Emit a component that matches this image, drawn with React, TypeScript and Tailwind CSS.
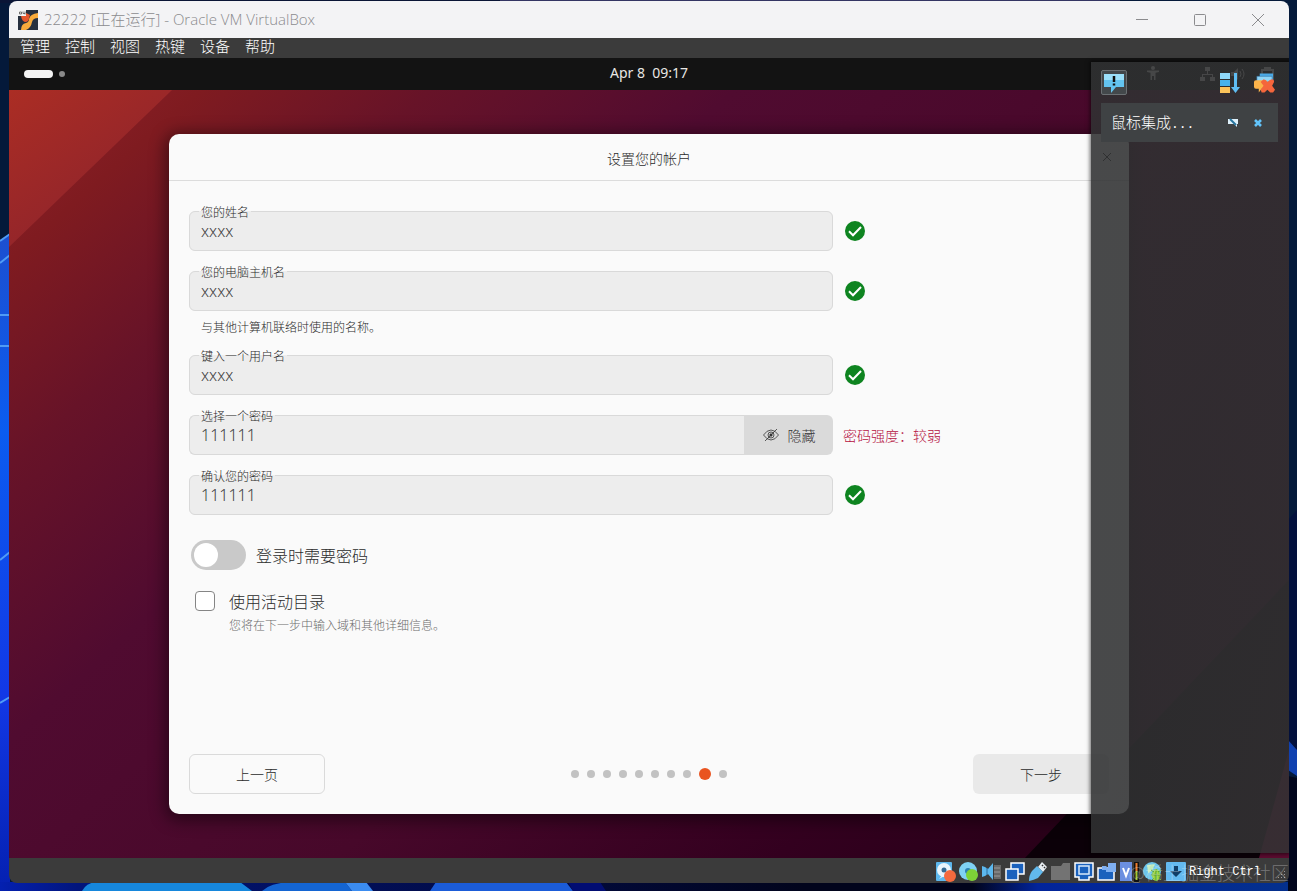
import { useState, type ReactNode } from 'react'

const menus = ['管理', '控制', '视图', '热键', '设备', '帮助']

function DesktopBackground() {
  return (
    <svg className="absolute inset-0 h-full w-full" viewBox="0 0 1297 891" preserveAspectRatio="none" aria-hidden="true">
      <defs>
        <linearGradient id="petal" x1="0" y1="0" x2="0" y2="1">
          <stop offset="0" stopColor="#1c4fd0" />
          <stop offset="0.3" stopColor="#0b5cf0" />
          <stop offset="0.7" stopColor="#1238e6" />
          <stop offset="1" stopColor="#0420b0" />
        </linearGradient>
        <linearGradient id="floor" x1="0" y1="0" x2="1" y2="0">
          <stop offset="0" stopColor="#0420b0" />
          <stop offset="0.06" stopColor="#02157c" />
          <stop offset="0.62" stopColor="#01041c" />
          <stop offset="0.75" stopColor="#01041c" />
          <stop offset="0.8" stopColor="#02249a" />
          <stop offset="1" stopColor="#04308c" />
        </linearGradient>
      </defs>
      <rect width="1297" height="891" fill="#04193a" />
      <rect x="0" width="500" height="3" fill="#0a1536" />
      <rect x="500" width="620" height="3" fill="#343563" />
      <path d="M0 241 L10 234 V891 H0Z" fill="url(#petal)" />
      <path d="M0 241 L10 234 M0 263 L10 255 M0 315 h10 M0 346 h10 M0 560 l10 -8 M0 703 l10 -6" stroke="#4f9bf5" strokeWidth="2" fill="none" />
      <rect y="882" width="1297" height="9" fill="url(#floor)" />
      <path d="M82 891 Q86 883 96 882 H240 L252 891Z" fill="#1687dc" />
      <path d="M262 891 Q270 883 290 882 H345 L352 891Z" fill="#1465d2" />
      <path d="M352 891 L345 882 H366 L373 891Z" fill="#3b8cf0" />
      <path d="M430 891 L436 882 H566 L573 891Z" fill="#1b5cd8" />
      <path d="M573 891 L568 882 H600 L606 891Z" fill="#020d72" />
      <path d="M1288 520 L1297 510 V774 L1288 768Z" fill="#02103c" />
      <path d="M1288 740 L1297 750 V776 L1288 770Z" fill="#1041b0" />
      <path d="M1288 776 L1297 778 V891 H1288Z" fill="#01061c" />
    </svg>
  )
}

function Wallpaper() {
  return (
    <svg className="absolute inset-0 h-full w-full" viewBox="0 0 1280 768" preserveAspectRatio="none" aria-hidden="true">
      <defs>
        <linearGradient id="wall" gradientUnits="userSpaceOnUse" x1="0" y1="0" x2="850" y2="950">
          <stop offset="0" stopColor="#90222a" />
          <stop offset="0.1" stopColor="#7f1b20" />
          <stop offset="0.22" stopColor="#671328" />
          <stop offset="0.38" stopColor="#500b30" />
          <stop offset="0.62" stopColor="#47082a" />
          <stop offset="0.85" stopColor="#33001f" />
          <stop offset="1" stopColor="#280018" />
        </linearGradient>
        <linearGradient id="corner" x1="0" y1="0" x2="0.6" y2="0.8">
          <stop offset="0" stopColor="#ab2d24" />
          <stop offset="1" stopColor="#90242b" />
        </linearGradient>
      </defs>
      <rect width="1280" height="768" fill="url(#wall)" />
      <path d="M0 0 H163 L0 157Z" fill="url(#corner)" />
      <path d="M1280 490 L1016 768 H1280Z" fill="#0b0008" />
      <path d="M1280 660 L1250 768 H1280Z" fill="#5c0b30" />
    </svg>
  )
}

function AppLogo() {
  return (
    <svg width="20" height="20" viewBox="0 0 20 20" aria-hidden="true">
      <rect width="20" height="20" fill="#26303f" />
      <path d="M3 20 Q3 14 8 13 Q11 12 11 9 Q12 4 20 3 V8 Q15 8 14 12 Q13 18 8 20Z" fill="#f8ab3c" />
      <path d="M3 6 Q4 12 8 12 Q11 11 11 8 L12 5 L8 3Z" fill="#e4572e" />
      <rect width="8" height="6" fill="#f4f4f4" />
      <path d="M1.5 2h2v2h-2zM5 1.5v2h2M7 1.5v3" stroke="#555" strokeWidth="0.8" fill="none" />
    </svg>
  )
}

function TitleBar() {
  return (
    <header className="flex h-[37px] items-center bg-[#f3f3f5] pl-[9px] pr-0.5 text-[#8b8b8e]">
      <AppLogo />
      <h1 className="ml-1.5 flex-1 pb-0.5 font-['Open_Sans','Noto_Sans_CJK_SC',sans-serif] text-[15px] leading-5">
        22222 [正在运行] - Oracle VM VirtualBox
      </h1>
      <button aria-label="最小化" className="flex h-full w-[58px] items-center justify-center">
        <svg width="12" height="12" viewBox="0 0 12 12" stroke="currentColor"><path d="M0 5.5h12" /></svg>
      </button>
      <button aria-label="最大化" className="flex h-full w-[58px] items-center justify-center">
        <svg width="12" height="12" viewBox="0 0 12 12" fill="none" stroke="currentColor"><rect x="0.5" y="0.5" width="11" height="11" rx="1" /></svg>
      </button>
      <button aria-label="关闭" className="flex h-full w-[58px] items-center justify-center">
        <svg width="12" height="12" viewBox="0 0 12 12" stroke="currentColor"><path d="M0 0l12 12M12 0L0 12" /></svg>
      </button>
    </header>
  )
}

function GuestTopBar() {
  return (
    <div className="relative flex h-8 items-center justify-between bg-[#131313] px-[15px] text-[#e8e6e3]">
      <div className="flex flex-1 items-center gap-1.5">
        <span className="h-2 w-[29px] rounded-full bg-[#f4f4f4]" />
        <span className="size-1.5 rounded-full bg-[#8a8a8a]" />
      </div>
      <time className="whitespace-pre pb-0.5 font-['Noto_Sans',sans-serif] text-sm font-normal">Apr 8  09:17</time>
      <div className="flex flex-1 items-center justify-end">
        <svg className="mr-10" width="14" height="16" viewBox="0 0 14 16" fill="currentColor" aria-hidden="true">
          <circle cx="7" cy="2" r="2" />
          <path d="M1 4.5h12v1.6l-3.5.6V14H8V10H6v4H4.5V6.7L1 6.1z" />
        </svg>
        <svg className="mr-4" width="15" height="14" viewBox="0 0 15 14" fill="currentColor" aria-hidden="true">
          <path d="M5 0h5v4H8v3h5v3h2v4h-5v-4h2V8H3v2h2v4H0v-4h2V7h5V4H5z" />
        </svg>
        <svg className="mr-4" width="14" height="14" viewBox="0 0 14 14" fill="currentColor" aria-hidden="true">
          <path d="M0 5h3l4-4v12L3 9H0z" />
          <path d="M9 4q2 3 0 6M11 2q4 5 0 10" fill="none" stroke="currentColor" />
        </svg>
        <svg width="13" height="15" viewBox="0 0 13 15" fill="none" stroke="currentColor" strokeWidth="2" aria-hidden="true">
          <path d="M1 3h11v11H1zM4 3V1h5v2" />
        </svg>
      </div>
    </div>
  )
}

function ValidIcon() {
  return (
    <span className="ml-3 flex h-10 items-center">
      <svg width="20" height="20" viewBox="0 0 20 20" role="img" aria-label="有效">
        <circle cx="10" cy="10" r="10" fill="#0e8420" />
        <path d="M4 10.3l4 4 8-8.3" fill="none" stroke="#fff" strokeWidth="2" />
      </svg>
    </span>
  )
}

interface FieldProps {
  id: string
  label: string
  value: string
  onChange: (value: string) => void
  button?: ReactNode
  status?: ReactNode
}

function Field({ id, label, value, onChange, button, status = <ValidIcon /> }: FieldProps) {
  return (
    <div className="flex items-end">
      <div className="flex w-[70%] items-end">
        <fieldset
          className={`min-w-0 flex-1 border border-[#d9d9d9] bg-[#ededed] pl-[9px] ${
            button ? 'rounded-l-md border-r-0' : 'rounded-md'
          }`}
        >
          <legend className="px-0.5 pt-0.5 text-xs leading-4 text-[#2b2b2b]">
            <label htmlFor={id}>{label}</label>
          </legend>
          <input
            id={id}
            type="text"
            value={value}
            onChange={(e) => onChange(e.target.value)}
            className="mb-2 block h-[22px] w-full bg-transparent px-0.5 font-['Noto_Sans',sans-serif] text-base leading-[22px] text-[#3d3d3d] outline-none"
          />
        </fieldset>
        {button}
      </div>
      {status}
    </div>
  )
}

function HideButton() {
  return (
    <button type="button" className="flex h-10 w-[89px] items-center justify-center gap-2 rounded-r-md bg-[#dadada] text-sm text-[#333]">
      <svg width="18" height="14" viewBox="0 0 18 14" fill="none" stroke="currentColor" strokeWidth="0.8" aria-hidden="true">
        <path d="M1.500 7Q5 2 9 2t7.500 5Q13 12 9 12T1.500 7z" />
        <circle cx="9" cy="7" r="3" />
        <circle cx="9" cy="7" r="1.2" fill="currentColor" />
        <path d="M3 13L15 1" />
      </svg>
      隐藏
    </button>
  )
}

function PageDots({ count, current }: { count: number; current: number }) {
  return (
    <div className="flex items-center gap-2">
      {Array.from({ length: count }, (_, i) => (
        <span key={i} className={i === current ? 'size-3 rounded-full bg-[#e95420]' : 'size-2 rounded-full bg-[#c2c2c2]'} />
      ))}
    </div>
  )
}

function SetupPanel() {
  const [form, setForm] = useState({
    name: 'xxxx',
    host: 'xxxx',
    user: 'xxxx',
    password: '111111',
    confirm: '111111',
  })
  const [requirePassword, setRequirePassword] = useState(false)
  const [useDirectory, setUseDirectory] = useState(false)

  const update = (key: keyof typeof form) => (value: string) => setForm({ ...form, [key]: value })

  return (
    <section className="relative mx-40 my-11 flex flex-1 flex-col overflow-hidden rounded-[10px] bg-[#fafafa] text-[#2b2b2b] shadow-[0_3px_16px_4px_rgba(0,0,0,0.45)]">
      {/* Header */}
      <div className="flex h-[47px] items-center border-b border-[#dcdcdc] px-4">
        <span className="w-3" />
        <h2 className="flex-1 pt-0.5 text-center text-sm">设置您的帐户</h2>
        <button aria-label="关闭" className="flex w-3 justify-center">
          <svg width="10" height="10" viewBox="0 0 10 10" stroke="currentColor"><path d="M1 1l8 8M9 1L1 9" /></svg>
        </button>
      </div>

      <form className="flex flex-1 flex-col px-5 pb-5 pt-[21px]" onSubmit={(e) => e.preventDefault()}>
        <div className="flex flex-col gap-[11px]">
          <Field id="name" label="您的姓名" value={form.name} onChange={update('name')} />
          <div>
            <Field id="host" label="您的电脑主机名" value={form.host} onChange={update('host')} />
            <p className="mt-2 pl-3 text-xs leading-4">与其他计算机联络时使用的名称。</p>
          </div>
          <Field id="user" label="键入一个用户名" value={form.user} onChange={update('user')} />
          <Field
            id="password"
            label="选择一个密码"
            value={form.password}
            onChange={update('password')}
            button={<HideButton />}
            status={<span className="ml-2.5 text-sm leading-10 text-[#b5103f]">密码强度：较弱</span>}
          />
          <Field id="confirm" label="确认您的密码" value={form.confirm} onChange={update('confirm')} />
        </div>

        {/* Switch */}
        <label className="mt-[25px] flex items-center gap-2.5 self-start pl-0.5 text-base leading-[30px]">
          <input
            type="checkbox"
            role="switch"
            checked={requirePassword}
            onChange={(e) => setRequirePassword(e.target.checked)}
            className="flex h-[30px] w-[55px] appearance-none items-center rounded-full bg-[#c9c9c9] px-[3px] before:size-6 before:rounded-full before:bg-white checked:justify-end checked:bg-[#e95420]"
          />
          登录时需要密码
        </label>

        {/* Active Directory */}
        <div className="mt-[19px] flex gap-3.5 pl-1.5">
          <input
            id="directory"
            type="checkbox"
            checked={useDirectory}
            onChange={(e) => setUseDirectory(e.target.checked)}
            className="mt-0.5 size-5 appearance-none rounded border border-[#858585] bg-white checked:bg-[#e95420]"
          />
          <div>
            <label htmlFor="directory" className="block text-base leading-6">使用活动目录</label>
            <p className="pt-0.5 text-xs leading-5 text-[#6b6b6b]">您将在下一步中输入域和其他详细信息。</p>
          </div>
        </div>

        {/* Navigation */}
        <div className="mt-auto flex items-center justify-between text-sm">
          <button type="button" className="h-10 w-[136px] rounded-md border border-[#dadada]">上一页</button>
          <PageDots count={10} current={8} />
          <button type="submit" className="h-10 w-[136px] rounded-md bg-[#e9e9e9]">下一步</button>
        </div>
      </form>
    </section>
  )
}

function NotificationCenter() {
  return (
    <aside className="absolute bottom-[5px] right-0 top-1 w-[198px] bg-linear-to-br from-[#303132]/88 via-[#303132]/88 to-[#333133]/90 pl-2.5 pr-[11px] pt-2 shadow-[0_0_4px_1px_rgba(0,0,0,0.6)]">
      <div className="flex items-center justify-between">
        <button aria-label="通知" className="flex h-[25px] w-[26px] items-center justify-center rounded-xs border border-[#6b7073] bg-[#43484b]">
          <svg width="20" height="20" viewBox="0 0 20 20" aria-hidden="true">
            <path d="M0 1h20v13h-8l-5 6v-6H0z" fill="#63c4f0" />
            <path d="M0 1h20v6H0z" fill="#9be0fa" />
            <path d="M10 3v6M10 10.5v2" stroke="#111" strokeWidth="2.500" />
          </svg>
        </button>
        <div className="flex items-center gap-3.5 pr-[3px]">
          <button aria-label="排序">
            <svg width="20" height="20" viewBox="0 0 20 20" aria-hidden="true">
              <rect x="0" y="0" width="10" height="6" fill="#8fd8f8" />
              <rect x="0" y="7" width="10" height="6" fill="#47b2ea" />
              <rect x="0" y="14" width="10" height="6" fill="#fbc35a" />
              <path d="M14 0h3v14h3l-4.500 6L11 14h3z" fill="#5fbdf2" />
            </svg>
          </button>
          <button aria-label="全部清除">
            <svg width="21" height="20" viewBox="0 0 22 20" aria-hidden="true">
              <path d="M6 0h14v7H6z" fill="#4ba9e6" />
              <path d="M3 3h16v6H3z" fill="#8fd4f6" stroke="#2c6ea0" strokeWidth="0.6" />
              <path d="M2 7h10q2 0 2 2v5q0 2-2 2H8l-3 4v-4H2q-2 0-2-2V9q0-2 2-2z" fill="#fbb44a" />
              <path d="M10 6q2 0 4 3 3-3 5-3t2 3l-2 4 3 4-2 3h-3l-3-3-3 3H8l-1-3 3-4-3-4z" fill="#f4663c" />
            </svg>
          </button>
        </div>
      </div>
      <div className="mt-2 flex h-[39px] items-center bg-[#3f4244] pl-2.5 pr-4 text-white">
        <span className="flex-1 text-[15px]">
          鼠标集成<span className="font-['Liberation_Mono',monospace] text-[13px]">...</span>
        </span>
        <button aria-label="不再显示" className="mr-4">
          <svg width="10" height="10" viewBox="0 0 10 10" aria-hidden="true">
            <path d="M0 1h10v5H9v3L6 6H0z" fill="#dff1fb" />
            <path d="M2 1l6 6" stroke="#27759f" strokeWidth="2" />
          </svg>
        </button>
        <button aria-label="关闭通知">
          <svg width="8" height="8" viewBox="0 0 8 8" aria-hidden="true">
            <path d="M1 1l6 6M7 1L1 7" stroke="#62c4fa" strokeWidth="2.600" />
          </svg>
        </button>
      </div>
    </aside>
  )
}

function StatusIcon({ children }: { children: ReactNode }) {
  return (
    <svg width="20" height="20" viewBox="0 0 20 20" aria-hidden="true">
      {children}
    </svg>
  )
}

function StatusBar() {
  return (
    <footer className="flex h-[25px] items-center justify-end gap-[3px] bg-[#3b3b3b] pr-[3px] pt-0.5 text-white">
      <StatusIcon>
        <rect x="0" y="0" width="16" height="19" rx="1" fill="#5db8ee" />
        <circle cx="8" cy="8" r="7" fill="#e8f5fc" />
        <circle cx="8" cy="8" r="2.5" fill="#356b94" />
        <path d="M3 17l5-6 2 2z" fill="#e8f5fc" />
        <circle cx="14" cy="14" r="6" fill="#f46a3e" />
      </StatusIcon>
      <StatusIcon>
        <circle cx="9" cy="9" r="9" fill="#7fd2f5" />
        <circle cx="9" cy="9" r="3" fill="#2c80b4" />
        <circle cx="13" cy="13" r="6" fill="#7ed337" />
      </StatusIcon>
      <StatusIcon>
        <path d="M0 4l3 1 3 2 5-6v17l-5-6-3 2-3 1z" fill="#5db8ee" />
        <path d="M5 6v7" stroke="#2c6ea0" />
        <rect x="12" y="3" width="7" height="14" fill="#686868" />
        <path d="M12 6h6M12 10h6M12 14h6" stroke="#999" />
      </StatusIcon>
      <StatusIcon>
        <rect x="6" y="1" width="13" height="11" fill="#1a61bd" stroke="#fff" strokeWidth="1.5" />
        <rect x="1" y="7" width="12" height="11" fill="#1a61bd" stroke="#fff" strokeWidth="1.5" />
      </StatusIcon>
      <StatusIcon>
        <path d="M14 0l5 5-4 5-5-5z" fill="#e9eef2" />
        <path d="M9 4l6 6-5 6Q6 18 1 19q0-6 3-10z" fill="#62b9ed" />
        <path d="M14 3l1 1M16 5l1 1" stroke="#333" strokeWidth="1.5" />
      </StatusIcon>
      <StatusIcon>
        <path d="M0 4h10l2-3h7v17H0z" fill="#737373" />
      </StatusIcon>
      <StatusIcon>
        <path d="M1 1h18v14h-4v3H5v-3H1z" fill="#1a61bd" stroke="#fff" strokeWidth="1.5" />
        <rect x="5" y="4" width="10" height="8" fill="#1a61bd" stroke="#d7e9fa" strokeWidth="1.5" />
      </StatusIcon>
      <StatusIcon>
        <path d="M1 6h16v12H1z" fill="#1a61bd" stroke="#fff" strokeWidth="1.5" />
        <path d="M5 4h4l2 2V1h8v9H9V8H5z" fill="#7fb0f2" />
      </StatusIcon>
      <StatusIcon>
        <rect x="0" y="0" width="12" height="19" fill="#6b8fe0" />
        <path d="M3 6l3 8 3-8" fill="none" stroke="#fff" strokeWidth="2" />
        <rect x="14" y="0" width="5" height="20" fill="#111" />
        <path d="M16.5 1v8" stroke="#f07b28" strokeWidth="2" />
        <path d="M16.5 9v9" stroke="#a5c82e" strokeWidth="2" />
      </StatusIcon>
      <StatusIcon>
        <circle cx="9" cy="9" r="9" fill="#6cc4ea" />
        <path d="M4 3l8-1-3 7-4 2zM8 13l6-2-3 6z" fill="#bfe9b9" />
        <ellipse cx="13" cy="13" rx="4" ry="6" fill="#8fd03c" />
        <path d="M8 8l3 2M8 13h10M9 18l2-2M18 8l-3 2M18 18l-2-2M13 7v12" stroke="#5aa02a" />
      </StatusIcon>
      <StatusIcon>
        <rect width="20" height="19" rx="1" fill="#64baf0" />
        <path d="M8 4h4v5h4l-6 6-6-6h4z" fill="#123f68" />
      </StatusIcon>
      <span className="mr-[14px] font-['Liberation_Mono',monospace] text-xs font-normal">Right Ctrl</span>
      <svg width="8" height="18" viewBox="0 0 8 18" fill="#9a9a9a" aria-hidden="true">
        <path d="M6 8h1v1H6zM3 11h1v1H3zM6 11h1v1H6zM0 14h1v1H0zM3 14h1v1H3zM6 14h1v1H6z" />
      </svg>
    </footer>
  )
}

export default function App() {
  return (
    <main className="relative flex min-h-screen flex-col overflow-hidden pb-2 pl-[9px] pr-2 pt-px font-['Noto_Sans_CJK_SC',sans-serif] font-light">
      <DesktopBackground />
      <div className="relative flex flex-1 flex-col overflow-hidden rounded-lg">
        <TitleBar />
        <nav className="flex h-5 items-center gap-[15px] bg-[#3b3b3b] pb-1 pl-[11px] text-[15px] leading-4 text-white">
          {menus.map((menu) => (
            <button key={menu}>{menu}</button>
          ))}
        </nav>
        <div className="relative flex flex-1 flex-col">
          <GuestTopBar />
          <div className="relative flex flex-1 flex-col">
            <Wallpaper />
            <SetupPanel />
          </div>
          <NotificationCenter />
        </div>
        <StatusBar />
      </div>
      {/* Watermark */}
      <span className="absolute bottom-1.5 right-2 text-lg leading-[26px] text-white/30">@稀土掘金技术社区</span>
    </main>
  )
}
